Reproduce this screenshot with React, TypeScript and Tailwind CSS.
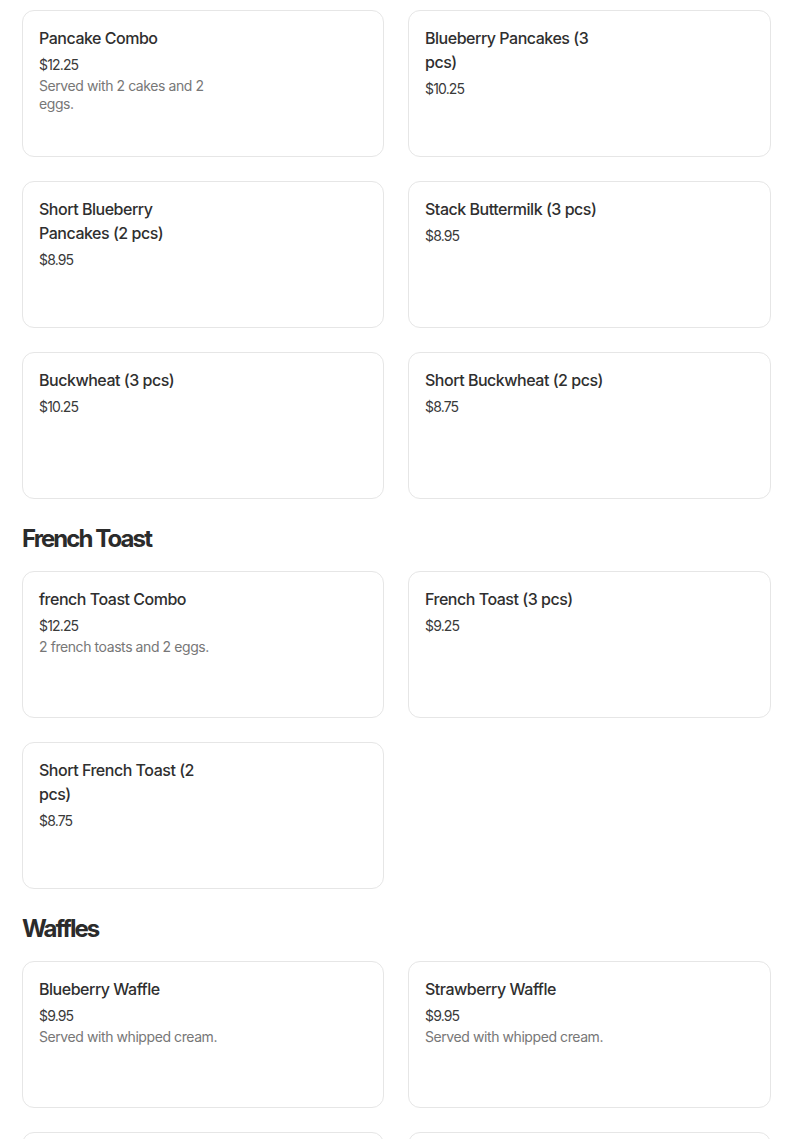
type Item = {
  name: string;
  price: string;
  desc?: string;
};

type Section = {
  title?: string;
  items: Item[];
};

const sections: Section[] = [
  {
    items: [
      { name: "Pancake Combo", price: "$12.25", desc: "Served with 2 cakes and 2 eggs." },
      { name: "Blueberry Pancakes (3 pcs)", price: "$10.25" },
      { name: "Short Blueberry Pancakes (2 pcs)", price: "$8.95" },
      { name: "Stack Buttermilk (3 pcs)", price: "$8.95" },
      { name: "Buckwheat (3 pcs)", price: "$10.25" },
      { name: "Short Buckwheat (2 pcs)", price: "$8.75" },
    ],
  },
  {
    title: "French Toast",
    items: [
      { name: "french Toast Combo", price: "$12.25", desc: "2 french toasts and 2 eggs." },
      { name: "French Toast (3 pcs)", price: "$9.25" },
      { name: "Short French Toast (2 pcs)", price: "$8.75" },
    ],
  },
  {
    title: "Waffles",
    items: [
      { name: "Blueberry Waffle", price: "$9.95", desc: "Served with whipped cream." },
      { name: "Strawberry Waffle", price: "$9.95", desc: "Served with whipped cream." },
      { name: "Belgian Waffle", price: "$8.95" },
      { name: "Pecan Waffle", price: "$9.95" },
    ],
  },
];

function MenuCard({ item }: { item: Item }) {
  return (
    <div className="h-[147px] rounded-xl border border-[#e6e6e6] bg-white px-4 pt-[15px]">
      <div className="w-[184px]">
        <h3 className="text-[16px] leading-6 font-medium tracking-[-0.03em] text-[#2f2f2f]">
          {item.name}
        </h3>
        <p className="mt-[5px] text-[14px] leading-5 text-[#3a3a3a] tracking-[-0.06em]">
          {item.price}
        </p>
        {item.desc && (
          <p className="mt-[2px] text-[14px] leading-[18px] tracking-[-0.03em] text-[#777777]">
            {item.desc}
          </p>
        )}
      </div>
    </div>
  );
}

export default function App() {
  return (
    <div
      className="min-h-screen bg-white pt-[10px] pl-[22px]"
      style={{ fontFamily: "Inter, 'Noto Sans', sans-serif" }}
    >
      <div className="w-[749px]">
        {sections.map((section, i) => (
          <section key={i}>
            {section.title && (
              <h2 className="mt-[24px] mb-[16px] text-[24px] leading-8 font-bold tracking-[-0.08em] text-[#2b2b2b]">
                {section.title}
              </h2>
            )}
            <div className="grid grid-cols-[362px_363px] gap-6">
              {section.items.map((item) => (
                <MenuCard key={item.name} item={item} />
              ))}
            </div>
          </section>
        ))}
      </div>
    </div>
  );
}
